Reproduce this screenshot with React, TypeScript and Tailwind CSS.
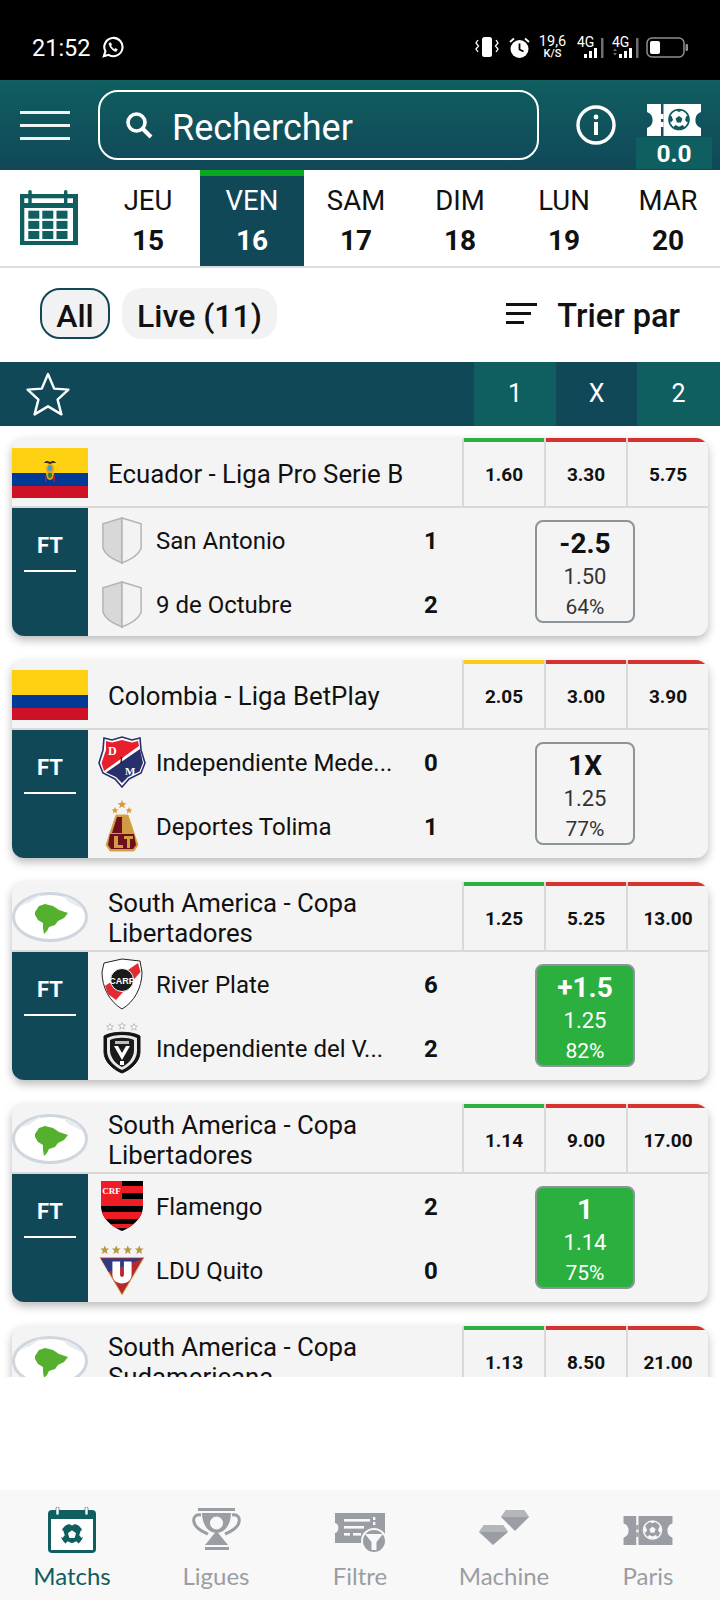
const days = [
  { label: 'JEU', num: '15' },
  { label: 'VEN', num: '16', active: true },
  { label: 'SAM', num: '17' },
  { label: 'DIM', num: '18' },
  { label: 'LUN', num: '19' },
  { label: 'MAR', num: '20' },
];

function Ball({ cx, cy, r, bg, fg }: { cx: number; cy: number; r: number; bg: string; fg: string }) {
  const k = r / 10;
  return (
    <g transform={`translate(${cx} ${cy}) scale(${k})`}>
      <circle r="10" fill={bg} stroke={fg} strokeWidth="1.6" />
      <path d="M0 -3.6 3.4 -1.1 2.1 2.9 -2.1 2.9 -3.4 -1.1Z" fill={fg} />
      <path d="M-3 -9 0 -7.4 3 -9 1.6 -9.9 -1.6 -9.9Z" fill={fg} />
      <path d="M9.4 -3.6 7.4 -3.6 6 0.6 8 3 9.8 1Z" fill={fg} />
      <path d="M-9.4 -3.6 -7.4 -3.6 -6 0.6 -8 3 -9.8 1Z" fill={fg} />
      <path d="M-5.6 7.8 -3.6 5.6 0 7.2 3.6 5.6 5.6 7.8 2.5 9.6 -2.5 9.6Z" fill={fg} />
    </g>
  );
}

function TicketIcon({ color, hole, className }: { color: string; hole: string; className: string }) {
  return (
    <svg viewBox="0 0 54 32" className={className}>
      <path d="M0 0H14V32H0V24A8.5 8.5 0 0 0 0 8Z" fill={color} />
      <path d="M16.5 0H54V8A8.5 8.5 0 0 0 54 24V32H16.5Z" fill={color} />
      <rect x="14" y="10" width="2.5" height="5" fill={color} />
      <rect x="14" y="18" width="2.5" height="5" fill={color} />
      <Ball cx={32} cy={15.5} r={10} bg={color} fg={hole} />
    </svg>
  );
}

function StatusIcons() {
  return (
    <div className="flex items-center text-white">
      <svg viewBox="0 0 24 20" className="h-[20px] w-[24px]">
        <rect x="7" y="0" width="10" height="20" rx="2.5" fill="#fff" />
        <path d="M3 3 1 6 3.5 9 1 12 3 15M21 3 23 6 20.5 9 23 12 21 15" stroke="#fff" strokeWidth="1.3" fill="none" />
      </svg>
      <svg viewBox="0 0 21 21" className="ml-[10px] h-[21px] w-[21px]">
        <circle cx="10.5" cy="12" r="9" fill="#fff" />
        <path d="M10.5 6.5V12.5L14.5 14.5" stroke="#000" strokeWidth="1.8" fill="none" />
        <path d="M1 5 5 1.5M20 5 16 1.5" stroke="#fff" strokeWidth="1.8" />
      </svg>
      <div className="ml-[9px] flex w-[27px] flex-col items-center font-['Roboto',sans-serif] text-white">
        <span className="text-[14.5px] leading-[13px]">19,6</span>
        <span className="mt-[1px] text-[11px] leading-[10px] font-medium">K/S</span>
      </div>
      <Signal first />
      <Signal />
      <svg viewBox="0 0 42 21" className="ml-[6px] h-[21px] w-[42px]">
        <rect x="1" y="1" width="37" height="19" rx="5" fill="none" stroke="#8e8e8e" strokeWidth="1.5" />
        <rect x="4" y="4" width="10" height="13" rx="2" fill="#fff" />
        <rect x="39.5" y="7" width="2.5" height="7" rx="1" fill="#8e8e8e" />
      </svg>
    </div>
  );
}

function Signal({ first }: { first?: boolean }) {
  return (
    <svg
      viewBox="0 0 28 22"
      className={first ? 'ml-[11px] h-[22px] w-[28px] overflow-visible' : 'ml-[7px] h-[22px] w-[28px] overflow-visible'}
    >
      <text x="0" y="11" fill="#fff" fontSize="14" fontFamily="Roboto, sans-serif">4G</text>
      <rect x="7" y="18" width="3" height="4" fill="#fff" />
      <rect x="12" y="15" width="3" height="7" fill="#fff" />
      <rect x="17" y="12" width="3" height="10" fill="#fff" />
      <rect x="24" y="2" width="2.5" height="20" fill="#6f6f6f" />
      {!first && <path d="M2 15 4 12.5 6 15ZM2 17 4 19.5 6 17Z" fill="#6f6f6f" transform="translate(-1 0)" />}
    </svg>
  );
}

function HeaderBar() {
  return (
    <div className="flex h-[90px] shrink-0 bg-gradient-to-b from-[#0f5e60] to-[#114858] pl-[20px] pr-[8px]">
      <div className="flex w-[50px] flex-col gap-[10px] pt-[31px]">
        <div className="h-[3px] bg-[#eef4f4]" />
        <div className="h-[3px] bg-[#eef4f4]" />
        <div className="h-[3px] bg-[#eef4f4]" />
      </div>
      <div className="mt-[10px] ml-[28px] flex h-[70px] w-[441px] items-center rounded-[20px] border-2 border-white pl-[25px] text-white">
        <svg viewBox="0 0 28 28" className="h-[28px] w-[28px]" fill="none" stroke="#fff">
          <circle cx="11.5" cy="11.5" r="8.5" strokeWidth="3.6" />
          <path d="M17.5 17.5 26 26" strokeWidth="4" />
        </svg>
        <span className="ml-[19px] pt-[5px] text-[36px] leading-none">Rechercher</span>
      </div>
      <svg viewBox="0 0 40 40" className="mt-[25px] ml-[37px] h-[40px] w-[40px]">
        <circle cx="20" cy="20" r="18" fill="none" stroke="#fff" strokeWidth="3.4" />
        <rect x="18" y="17" width="4" height="13" fill="#fff" />
        <circle cx="20" cy="12" r="2.4" fill="#fff" />
      </svg>
      <div className="ml-[20px] flex w-[76px] flex-col items-center pt-[24px]">
        <TicketIcon color="#fff" hole="#0f5a5e" className="h-[32px] w-[54px]" />
        <div className="mt-[1px] flex h-[32px] w-[76px] items-center justify-center bg-[#0f5e60] pt-[3px] text-[24.5px] font-bold text-white">
          0.0
        </div>
      </div>
    </div>
  );
}

function DateRow() {
  return (
    <div className="flex h-[98px] shrink-0 border-b-2 border-[#dcdcdc] bg-white">
      <div className="flex w-[96px] items-start pt-[20px] pl-[20px]">
        <svg viewBox="0 0 58 55" className="h-[55px] w-[58px]">
          <rect x="0" y="4" width="58" height="51" fill="#0f5e60" />
          <rect x="8.3" y="0" width="3.4" height="12" rx="1.5" fill="#0f5e60" />
          <rect x="44" y="0" width="3.4" height="12" rx="1.5" fill="#0f5e60" />
          <rect x="4.3" y="8.3" width="4" height="4.7" fill="#fff" />
          <rect x="11.7" y="8.3" width="32.3" height="4.7" fill="#fff" />
          <rect x="47.4" y="8.3" width="5.6" height="4.7" fill="#fff" />
          <rect x="4.3" y="18" width="48.7" height="33" fill="#fff" />
          {[20.7, 30.9, 41].map((y) =>
            [8.3, 22.3, 36.5].map((x) => <rect key={`${y}-${x}`} x={x} y={y} width="11" height="8" fill="#0f5e60" />),
          )}
        </svg>
      </div>
      {days.map((d) => (
        <div
          key={d.label}
          className={`flex h-[96px] w-[104px] flex-col items-center border-t-[6px] pt-[7px] ${
            d.active ? 'border-[#0aa81e] bg-[#114858] text-white' : 'border-white text-[#111]'
          }`}
        >
          <span className="text-[27.5px] leading-[36px]">{d.label}</span>
          <span className="mt-[4px] text-[28px] leading-[36px] font-bold">{d.num}</span>
        </div>
      ))}
    </div>
  );
}

function FilterRow() {
  return (
    <div className="flex h-[94px] shrink-0 items-start bg-white pt-[20px] pl-[40px]">
      <div className="flex h-[51px] w-[70px] items-center justify-center rounded-[20px] border-2 border-[#114858] bg-[#f2f2f2] pt-[5px] text-[32px] font-medium text-[#111]">
        All
      </div>
      <div className="ml-[12px] flex h-[51px] w-[155px] items-center justify-center rounded-[20px] bg-[#f2f2f2] pt-[5px] text-[32px] font-medium text-[#111]">
        Live (11)
      </div>
      <div className="ml-auto flex h-[51px] items-center pr-[40px]">
        <svg viewBox="0 0 31 24" className="h-[24px] w-[31px]" fill="#111">
          <rect x="0" y="1" width="31" height="3" />
          <rect x="0" y="10" width="25" height="3" />
          <rect x="0" y="19" width="18" height="3" />
        </svg>
        <span className="ml-[20px] pt-[5px] text-[32.5px] font-medium text-[#111]">Trier par</span>
      </div>
    </div>
  );
}

function StarBar() {
  return (
    <div className="flex h-[64px] shrink-0 bg-[#114858] text-[25px] text-white">
      <div className="flex w-[474px] items-center pl-[26px]">
        <svg viewBox="0 0 44 44" className="h-[44px] w-[44px]" fill="none" stroke="#fff" strokeWidth="2.4" strokeLinejoin="round">
          <path d="M22 2 28.2 16.6 42.4 17.6 31.6 27.6 35.4 42.4 22 34.4 8.6 42.4 12.4 27.6 1.6 17.6 15.8 16.6Z" />
        </svg>
      </div>
      <div className="flex w-[82px] items-center justify-center bg-[#0f5e60]">1</div>
      <div className="flex w-[81px] items-center justify-center">X</div>
      <div className="flex w-[83px] items-center justify-center bg-[#0f5e60]">2</div>
    </div>
  );
}

function EcuadorFlag() {
  return (
    <div className="flex h-[50px] w-[76px] flex-col">
      <div className="flex h-[25px] items-end justify-center bg-[#fed012]">
        <svg viewBox="0 0 16 13" className="h-[13px] w-[16px]">
          <path d="M2 3C4 0 6 1 8 2 10 1 12 0 14 3L11 3 8 4 5 3Z" fill="#3b2a12" />
          <ellipse cx="8" cy="9" rx="4" ry="5" fill="#d9a520" />
          <ellipse cx="8" cy="8" rx="2.2" ry="3" fill="#4f9ad0" />
        </svg>
      </div>
      <div className="flex h-[12.5px] justify-center bg-[#003a94]">
        <svg viewBox="0 0 16 13" className="h-[13px] w-[16px]">
          <ellipse cx="8" cy="1" rx="4" ry="6" fill="#d9a520" />
          <ellipse cx="8" cy="2" rx="2" ry="3" fill="#2e7d32" />
          <rect x="3" y="2" width="1.4" height="7" fill="#ce1126" />
          <rect x="11.6" y="2" width="1.4" height="7" fill="#ce1126" />
        </svg>
      </div>
      <div className="h-[12.5px] bg-[#ce1126]" />
    </div>
  );
}

function ColombiaFlag() {
  return (
    <div className="flex h-[50px] w-[76px] flex-col">
      <div className="h-[25px] bg-[#fed012]" />
      <div className="h-[12.5px] bg-[#003a94]" />
      <div className="h-[12.5px] bg-[#ce1126]" />
    </div>
  );
}

function GlobeFlag() {
  return (
    <svg viewBox="0 0 76 50" className="h-[50px] w-[76px]">
      <ellipse cx="38" cy="25" rx="36.5" ry="23.5" fill="#fff" stroke="#d0d6de" strokeWidth="3" />
      <path d="M8 15C14 8 22 4 30 2 25 6 20 8 17 11 13 11 11 13 8 15Z" fill="#e8ebf0" />
      <path d="M52 4C60 6 67 10 71 17 66 15 62 12 58 11 55 9 53 7 52 4Z" fill="#e8ebf0" />
      <path d="M23 20 27 14 33 12 41 14 47 18 56 21 52 26 46 29 43 33 37 35 35 39 32 42 31 36 31 31 26 28 23 23Z" fill="#55b02e" />
    </svg>
  );
}

function GrayShield() {
  return (
    <svg viewBox="0 0 42 48" className="h-[47px] w-[42px]">
      <path d="M21 1 1.5 7V32C4 39 13 44 21 47Z" fill="#d8d8d8" stroke="#b3b3b3" strokeWidth="1.5" />
      <path d="M21 1 40.5 7V32C38 39 29 44 21 47Z" fill="#f3f3f3" stroke="#b3b3b3" strokeWidth="1.5" />
    </svg>
  );
}

function DimLogo() {
  return (
    <svg viewBox="0 0 48 52" className="h-[52px] w-[48px]">
      <path d="M6 2 14 4 24 1 34 4 42 2 43 14 47 27 43 37 31 43 24 51 17 43 5 37 1 27 5 14Z" fill="#fff" stroke="#27306b" strokeWidth="1.6" />
      <path d="M8 5 14 6.5 24 4 34 6.5 40 5 41 10 6 35 3.5 27 8 14Z" fill="#e8202e" />
      <path d="M42 13 45 27 41.5 35.5 30 41 24 47 18 41 8 36.5Z" fill="#27306b" />
      <text x="10" y="19" fill="#fff" fontSize="12" fontWeight="700" fontFamily="Liberation Serif, serif">D</text>
      <text x="21.5" y="27" fill="#1a1a1a" fontSize="9" fontWeight="700" fontFamily="Liberation Serif, serif">I</text>
      <text x="27" y="39" fill="#fff" fontSize="11" fontWeight="700" fontFamily="Liberation Serif, serif">M</text>
    </svg>
  );
}

function TolimaLogo() {
  return (
    <svg viewBox="0 0 34 52" className="h-[52px] w-[34px]">
      <path d="M17 0 18.3 3 21.5 3.2 19 5.2 19.8 8.2 17 6.6 14.2 8.2 15 5.2 12.5 3.2 15.7 3Z" fill="#d79b3a" />
      <path d="M10 7 11 9.3 13.4 9.5 11.5 11 12.2 13.4 10 12 7.8 13.4 8.5 11 6.6 9.5 9 9.3Z" fill="#d79b3a" />
      <path d="M24 7 25 9.3 27.4 9.5 25.5 11 26.2 13.4 24 12 21.8 13.4 22.5 11 20.6 9.5 23 9.3Z" fill="#d79b3a" />
      <path d="M11 15H23L33 45 29 51H5L1 45Z" fill="#cf9c42" stroke="#d7a850" strokeWidth="1" />
      <path d="M12 17H17V33H7Z" fill="#6f0f1e" />
      <path d="M5 34H29L31 45 28 49H6L3 45Z" fill="#6f0f1e" />
      <path d="M9 36H13V45H18V48H9ZM19 36H28V39H25V48H22V39H19Z" fill="#cf9c42" />
    </svg>
  );
}

function RiverLogo() {
  return (
    <svg viewBox="0 0 42 52" className="h-[52px] w-[42px]">
      <path d="M3 5 21 1 39 3 41 14C41 30 33 44 21 51 9 44 1 30 1 14Z" fill="#fff" stroke="#222" strokeWidth="1" />
      <path d="M37 5 39.5 14 15 42 7 36 4 28Z" fill="#e12a32" />
      <circle cx="21" cy="22" r="11.5" fill="#1a1a1a" stroke="#fff" strokeWidth="1" />
      <text x="21" y="26" textAnchor="middle" fill="#fff" fontSize="9" fontWeight="700" fontFamily="Liberation Sans, sans-serif">CARP</text>
    </svg>
  );
}

function DelValleLogo() {
  const stars = [8, 20, 32];
  return (
    <svg viewBox="0 0 40 52" className="h-[52px] w-[40px]">
      {stars.map((x, i) => (
        <path
          key={x}
          transform={`translate(${x} ${i === 1 ? 4 : 5})`}
          d="M0 -3.4 1 -1 3.4 -1 1.5 .6 2.2 3 0 1.6 -2.2 3 -1.5 .6 -3.4 -1 -1 -1Z"
          fill="#fff"
          stroke="#9a9a9a"
          strokeWidth=".6"
        />
      ))}
      <path d="M2 14C10 9 30 9 38 14V30C38 40 28 48 20 51 12 48 2 40 2 30Z" fill="#141414" stroke="#141414" />
      <path d="M5 16C12 12 28 12 35 16V29C35 38 27 45 20 48 13 45 5 38 5 29Z" fill="#e8e8e8" />
      <path d="M8 18C14 15 26 15 32 18V28C32 36 26 42 20 45 14 42 8 36 8 28Z" fill="#1a1a1a" />
      <rect x="13" y="19" width="14" height="3" fill="#bdbdbd" />
      <path d="M12 24 20 38 28 24 24 24 20 31 16 24Z" fill="#fff" />
      <rect x="18" y="39" width="4" height="4" fill="#fff" />
    </svg>
  );
}

function FlamengoLogo() {
  return (
    <svg viewBox="0 0 44 52" className="h-[52px] w-[44px]">
      <defs>
        <clipPath id="fla">
          <path d="M1 1H43V26C43 38 32 47 22 51 12 47 1 38 1 26Z" />
        </clipPath>
      </defs>
      <g clipPath="url(#fla)">
        <rect width="44" height="52" fill="#000" />
        <rect y="6" width="44" height="7" fill="#ee1c25" />
        <rect y="19" width="44" height="7" fill="#ee1c25" />
        <rect y="32" width="44" height="7" fill="#ee1c25" />
        <rect y="44" width="44" height="4" fill="#ee1c25" />
        <rect x="1" y="1" width="21" height="18" fill="#ee1c25" />
      </g>
      <text x="11.5" y="14" textAnchor="middle" fill="#fff" fontSize="9" fontWeight="700" fontFamily="Liberation Serif, serif">CRF</text>
    </svg>
  );
}

function LduLogo() {
  const stars = [6, 18, 30, 42];
  return (
    <svg viewBox="0 0 48 52" className="h-[52px] w-[46px]">
      {stars.map((x) => (
        <path key={x} transform={`translate(${x} 5)`} d="M0 -4.6 1.4 -1.4 4.6 -1.4 2 .8 3 4.4 0 2.4 -3 4.4 -2 .8 -4.6 -1.4 -1.4 -1.4Z" fill="#b8973f" />
      ))}
      <path d="M1 13H47L24 52Z" fill="#b42a30" stroke="#d5b35c" strokeWidth="1" />
      <path d="M2 14 46 14 10 28Z" fill="#2e3a83" />
      <path d="M14 17H22V31C22 34 26 34 26 31V17H34V31C34 43 14 43 14 31Z" fill="#fff" />
    </svg>
  );
}

type Tip = { top: string; odds: string; pct: string; won?: boolean };
type Team = { name: string; score: string; logo: React.ReactNode };
type MatchData = {
  flag: React.ReactNode;
  league: string;
  odds: [string, string, string];
  firstBar: string;
  teams: [Team, Team];
  tip: Tip;
};

const shield = <GrayShield />;

const matches: MatchData[] = [
  {
    flag: <EcuadorFlag />,
    league: 'Ecuador - Liga Pro Serie B',
    odds: ['1.60', '3.30', '5.75'],
    firstBar: 'bg-[#2cb040]',
    teams: [
      { name: 'San Antonio', score: '1', logo: shield },
      { name: '9 de Octubre', score: '2', logo: shield },
    ],
    tip: { top: '-2.5', odds: '1.50', pct: '64%' },
  },
  {
    flag: <ColombiaFlag />,
    league: 'Colombia - Liga BetPlay',
    odds: ['2.05', '3.00', '3.90'],
    firstBar: 'bg-[#fecb17]',
    teams: [
      { name: 'Independiente Mede...', score: '0', logo: <DimLogo /> },
      { name: 'Deportes Tolima', score: '1', logo: <TolimaLogo /> },
    ],
    tip: { top: '1X', odds: '1.25', pct: '77%' },
  },
  {
    flag: <GlobeFlag />,
    league: 'South America - Copa Libertadores',
    odds: ['1.25', '5.25', '13.00'],
    firstBar: 'bg-[#2cb040]',
    teams: [
      { name: 'River Plate', score: '6', logo: <RiverLogo /> },
      { name: 'Independiente del V...', score: '2', logo: <DelValleLogo /> },
    ],
    tip: { top: '+1.5', odds: '1.25', pct: '82%', won: true },
  },
  {
    flag: <GlobeFlag />,
    league: 'South America - Copa Libertadores',
    odds: ['1.14', '9.00', '17.00'],
    firstBar: 'bg-[#2cb040]',
    teams: [
      { name: 'Flamengo', score: '2', logo: <FlamengoLogo /> },
      { name: 'LDU Quito', score: '0', logo: <LduLogo /> },
    ],
    tip: { top: '1', odds: '1.14', pct: '75%', won: true },
  },
  {
    flag: <GlobeFlag />,
    league: 'South America - Copa Sudamericana',
    odds: ['1.13', '8.50', '21.00'],
    firstBar: 'bg-[#2cb040]',
    teams: [
      { name: '', score: '', logo: null },
      { name: '', score: '', logo: null },
    ],
    tip: { top: '', odds: '', pct: '' },
  },
];

function OddCell({ value, bar }: { value: string; bar: string }) {
  return (
    <div className="flex flex-1 flex-col border-l-2 border-[#d9d9d9]">
      <div className={`h-[4px] ${bar}`} />
      <div className="flex flex-1 items-center justify-center pt-[2px] text-[19px] font-bold text-[#111]">{value}</div>
    </div>
  );
}

function MatchCard({ match }: { match: MatchData }) {
  return (
    <div className="shrink-0 overflow-hidden rounded-[12px] bg-[#f4f4f4] shadow-[0_4px_10px_rgba(0,0,0,0.28)]">
      <div className="flex h-[70px] border-b-2 border-[#d9d9d9]">
        <div className="flex w-[76px] shrink-0 items-center pt-[2px]">{match.flag}</div>
        <div className="flex w-[374px] shrink-0 items-center pt-[3px] pr-[40px] pl-[20px] text-[25.8px] leading-[30px] text-[#111]">
          {match.league}
        </div>
        <div className="flex flex-1">
          <OddCell value={match.odds[0]} bar={match.firstBar} />
          <OddCell value={match.odds[1]} bar="bg-[#d6322f]" />
          <OddCell value={match.odds[2]} bar="bg-[#d6322f]" />
        </div>
      </div>
      <div className="flex h-[128px]">
        <div className="flex w-[76px] shrink-0 flex-col items-center bg-[#114858]">
          <div className="flex h-[64px] w-[52px] items-center justify-center border-b-2 border-white pt-[12px] text-[22px] font-bold text-white">
            FT
          </div>
        </div>
        <div className="flex w-[426px] shrink-0 flex-col">
          {match.teams.map((t, i) => (
            <div key={i} className="flex h-[64px] items-center">
              <div className="flex w-[68px] shrink-0 items-center justify-center">{t.logo}</div>
              <span className="w-[268px] shrink-0 pt-[1px] text-[24px] whitespace-nowrap text-[#111]">{t.name}</span>
              <span className="pt-[1px] text-[24px] font-bold text-[#111]">{t.score}</span>
            </div>
          ))}
        </div>
        <div className="pt-[12px] pl-[21px]">
          {match.tip.top && (
            <div
              className={`flex h-[103px] w-[100px] flex-col items-center rounded-[8px] border-2 border-[#8a9499] pt-[3px] ${
                match.tip.won ? 'bg-[#2bb040] text-white' : 'text-[#333]'
              }`}
            >
              <span className={`text-[28px] leading-[37px] font-bold ${match.tip.won ? 'text-white' : 'text-[#111]'}`}>
                {match.tip.top}
              </span>
              <span className="text-[22px] leading-[30px]">{match.tip.odds}</span>
              <span className="text-[21px] leading-[30px]">{match.tip.pct}</span>
            </div>
          )}
        </div>
      </div>
    </div>
  );
}

function NavIcon({ name, color }: { name: string; color: string }) {
  if (name === 'Matchs') {
    return (
      <svg viewBox="0 0 48 46" className="h-[46px] w-[48px]">
        <rect x="0" y="3" width="48" height="43" rx="4" fill={color} />
        <rect x="8" y="0" width="3" height="8" rx="1.5" fill="#fff" stroke={color} strokeWidth=".6" />
        <rect x="37" y="0" width="3" height="8" rx="1.5" fill="#fff" stroke={color} strokeWidth=".6" />
        <rect x="3" y="12" width="42" height="31" fill="#fff" />
        <Ball cx={24} cy={27.5} r={12} bg={color} fg="#fff" />
      </svg>
    );
  }
  if (name === 'Ligues') {
    return (
      <svg viewBox="0 0 49 46" className="h-[46px] w-[49px]">
        <rect x="6" y="1" width="37" height="3" fill={color} />
        <path d="M10 6H39C39 17 33 26 24.5 26 16 26 10 17 10 6Z" fill={color} />
        <path d="M9 8C3 7 1 11 2 15 3 21 10 24 16 27M40 8C46 7 48 11 47 15 46 21 39 24 33 27" fill="none" stroke={color} strokeWidth="3" />
        <circle cx="24.5" cy="16" r="6.5" fill="#f8f8f8" />
        <path d="M24.5 24 L36 38H13Z" fill={color} />
        <rect x="13" y="40" width="24" height="3" fill={color} />
      </svg>
    );
  }
  if (name === 'Filtre') {
    return (
      <svg viewBox="0 0 50 46" className="h-[46px] w-[50px]">
        <path d="M0 6H50V36H0V26C4 25 5 17 0 16Z" fill={color} />
        <rect x="9" y="12" width="26" height="2.6" fill="#f8f8f8" />
        <rect x="9" y="19" width="20" height="2.6" fill="#f8f8f8" />
        <rect x="9" y="26" width="6" height="2.6" fill="#f8f8f8" />
        <rect x="18" y="26" width="8" height="2.6" fill="#f8f8f8" />
        <rect x="38" y="10" width="2.4" height="3" fill="#f8f8f8" />
        <rect x="38" y="15" width="2.4" height="3" fill="#f8f8f8" />
        <circle cx="39" cy="34" r="12" fill={color} stroke="#f8f8f8" strokeWidth="2" />
        <path d="M30 27H48L41.5 35V43H36.5V35Z" fill="#f8f8f8" />
      </svg>
    );
  }
  if (name === 'Machine') {
    return (
      <svg viewBox="0 0 50 46" className="h-[46px] w-[50px]">
        <path d="M27 3H45L50 10 36 24 22 10Z" fill={color} />
        <path d="M22 10H50L45 3H27Z" fill="#b4b6b9" />
        <path d="M5 18H24L29 25 14 38 0 25Z" fill={color} />
        <path d="M0 25H29L24 18H5Z" fill="#b4b6b9" />
      </svg>
    );
  }
  return (
    <div className="flex h-[46px] w-[50px] items-center">
      <TicketIcon color={color} hole="#f8f8f8" className="h-[29px] w-[50px]" />
    </div>
  );
}

const navItems = ['Matchs', 'Ligues', 'Filtre', 'Machine', 'Paris'];

function BottomNav() {
  return (
    <div className="flex h-[110px] shrink-0 bg-[#f8f8f8] font-['Lato',sans-serif]">
      {navItems.map((name, i) => (
        <div key={name} className="flex w-[144px] flex-col items-center pt-[17px]">
          <NavIcon name={name} color={i === 0 ? '#0f5e60' : '#9a9da3'} />
          <span className={`mt-[6px] text-[24px] leading-[34px] ${i === 0 ? 'text-[#0f5e60]' : 'text-[#9a9da3]'}`}>
            {name}
          </span>
        </div>
      ))}
    </div>
  );
}

export default function App() {
  return (
    <div className="flex h-[1600px] w-[720px] flex-col overflow-hidden bg-white font-['Roboto',sans-serif]">
      <div className="flex h-[80px] shrink-0 items-center justify-between bg-black pt-[14px] pr-[32px] pl-[32px]">
        <div className="flex items-center text-white">
          <span className="pt-[3px] text-[23.5px]">21:52</span>
          <svg viewBox="0 0 24 24" className="ml-[10px] h-[23px] w-[23px]" fill="none" stroke="#fff" strokeWidth="2.2">
            <path d="M3 21 4.6 16A9.5 9.5 0 1 1 8 19.6Z" />
            <path d="M8.5 7.5C8 10 12 16 16 16L17 14 14.8 13 14 14C12.5 13.5 10.8 11.7 10.3 10.2L11 9 10 7Z" fill="#fff" strokeWidth="0.8" />
          </svg>
        </div>
        <StatusIcons />
      </div>
      <HeaderBar />
      <DateRow />
      <FilterRow />
      <StarBar />
      <div className="flex h-[951px] shrink-0 flex-col gap-[24px] overflow-hidden px-[12px] pt-[12px]">
        {matches.map((m, i) => (
          <MatchCard key={i} match={m} />
        ))}
      </div>
      <div className="flex-1" />
      <BottomNav />
    </div>
  );
}
